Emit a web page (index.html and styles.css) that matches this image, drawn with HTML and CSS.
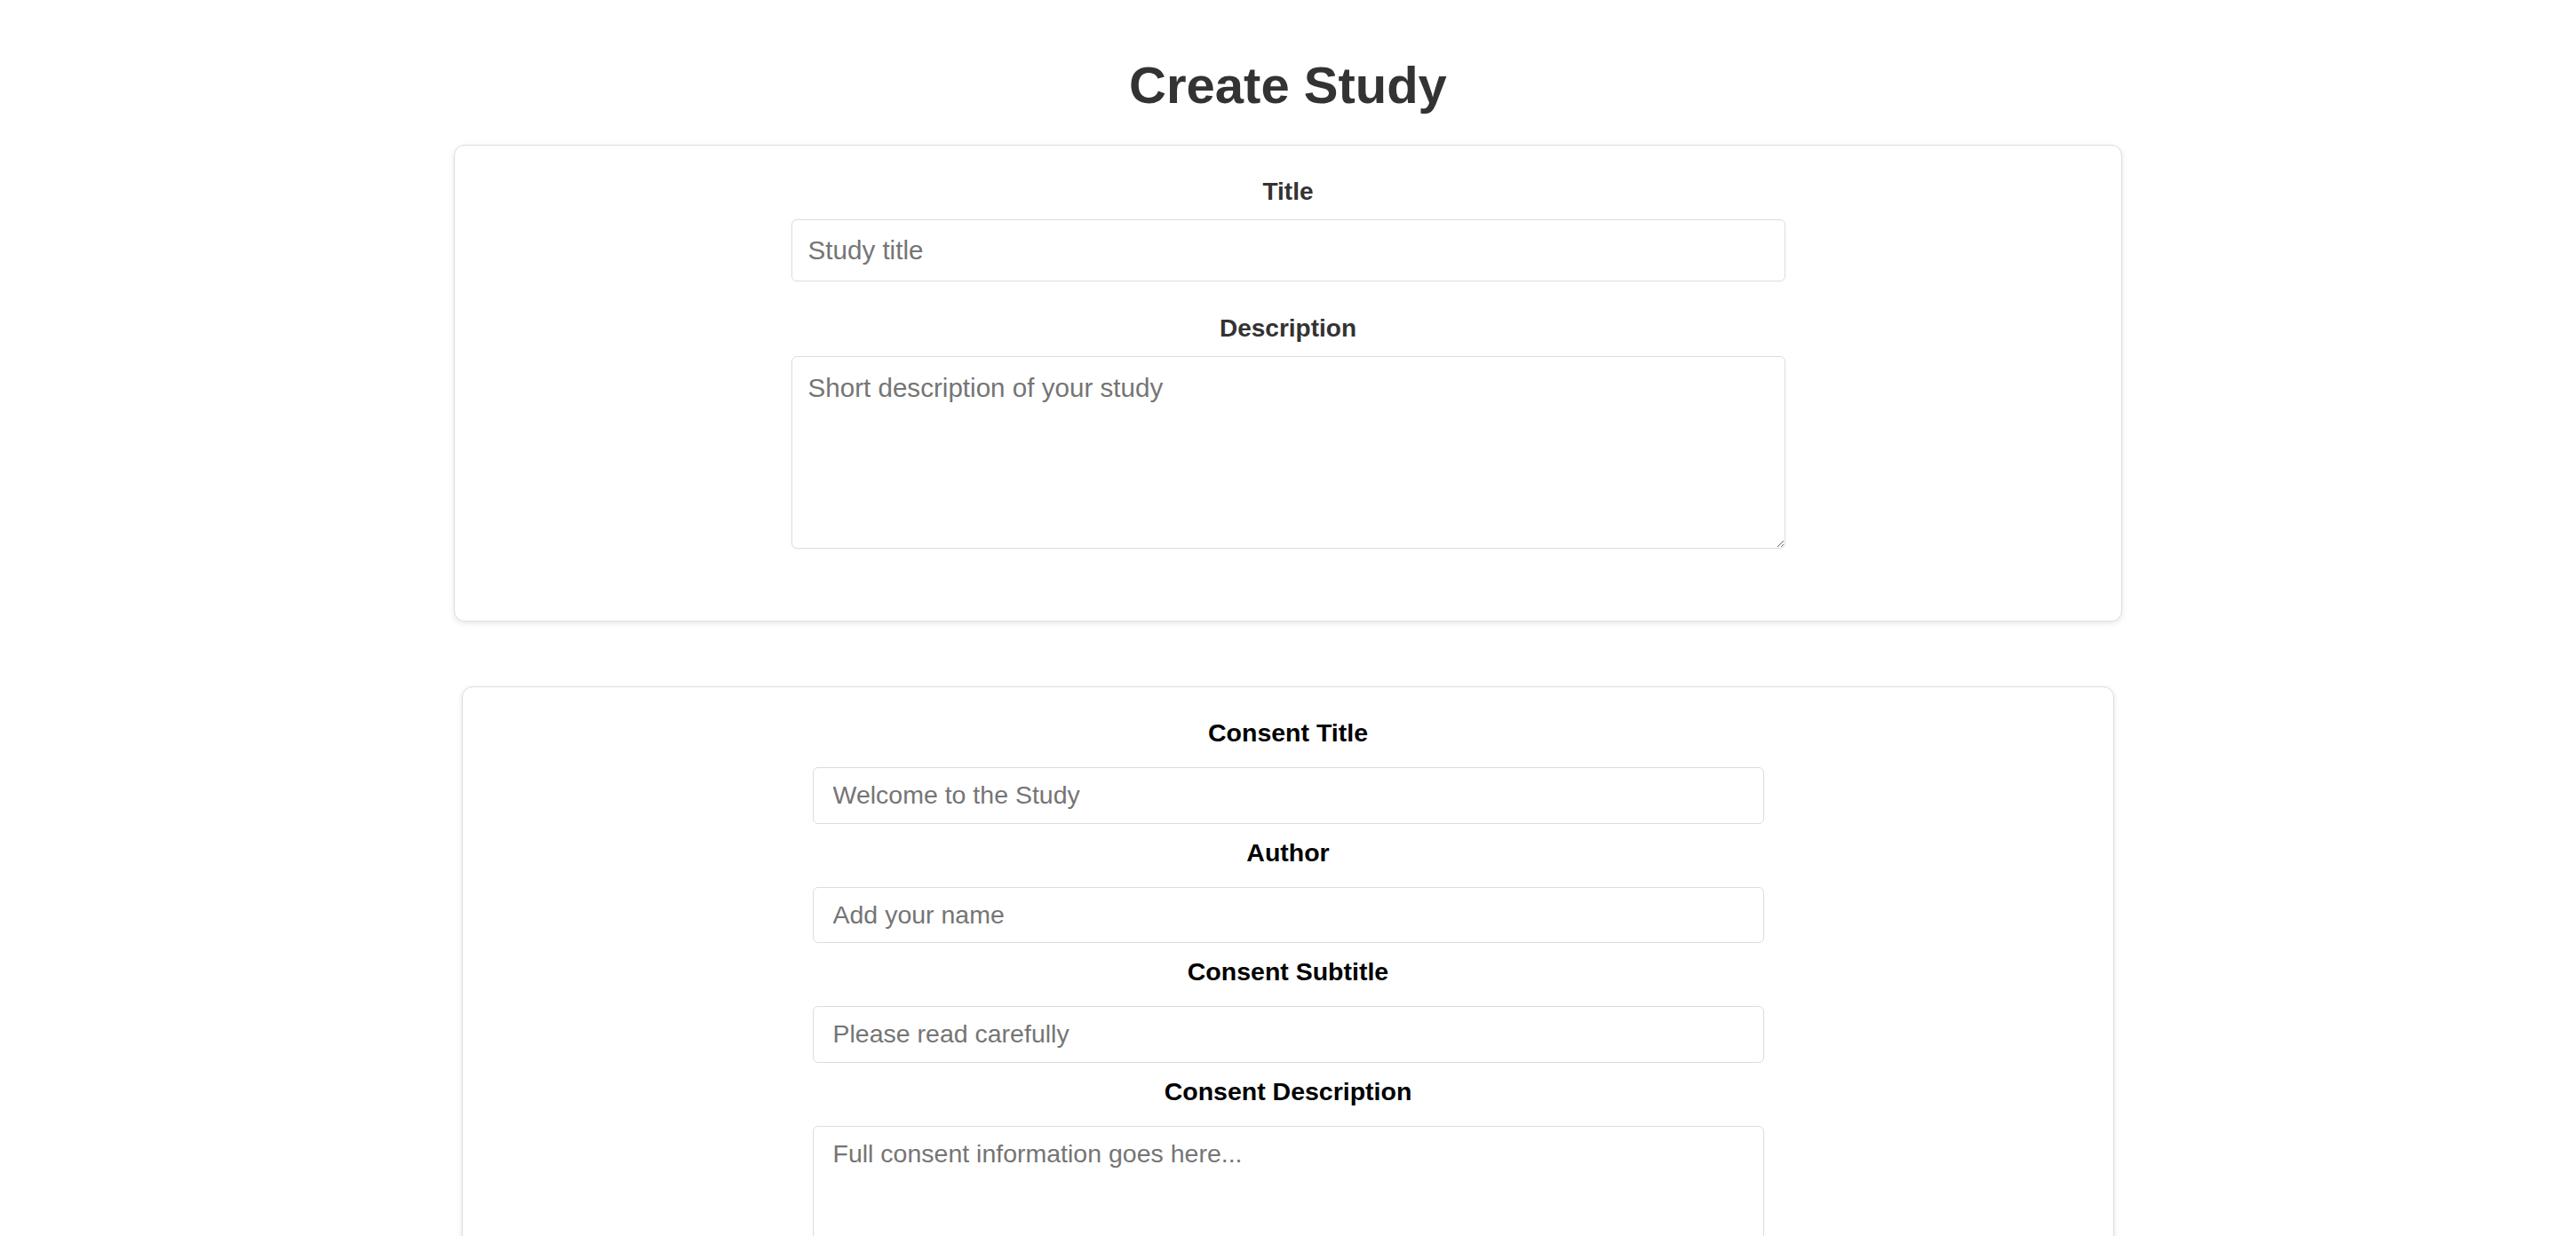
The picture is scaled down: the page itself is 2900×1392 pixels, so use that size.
FILE: index.html
```html
<!DOCTYPE html>
<html lang="en">
<head>
<meta charset="utf-8">
<title>Create Study</title>
<link rel="stylesheet" href="styles.css">
</head>
<body>
<main class="page">
  <h1 class="page-title">Create Study</h1>

  <section class="card card-study">
    <div class="field">
      <label class="label" for="title">Title</label>
      <input class="input" id="title" type="text" placeholder="Study title">
    </div>
    <div class="field">
      <label class="label" for="desc">Description</label>
      <textarea class="textarea" id="desc" placeholder="Short description of your study"></textarea>
    </div>
  </section>

  <section class="card card-consent">
    <div class="cfield">
      <label class="clabel" for="ctitle">Consent Title</label>
      <input class="cinput" id="ctitle" type="text" placeholder="Welcome to the Study">
    </div>
    <div class="cfield">
      <label class="clabel" for="author">Author</label>
      <input class="cinput" id="author" type="text" placeholder="Add your name">
    </div>
    <div class="cfield">
      <label class="clabel" for="csub">Consent Subtitle</label>
      <input class="cinput" id="csub" type="text" placeholder="Please read carefully">
    </div>
    <div class="cfield">
      <label class="clabel" for="cdesc">Consent Description</label>
      <textarea class="ctextarea" id="cdesc" placeholder="Full consent information goes here..."></textarea>
    </div>
  </section>
</main>
</body>
</html>
```

FILE: styles.css
```css
html, body {
  margin: 0;
  padding: 0;
  background: #ffffff;
}

body {
  font-family: "Liberation Sans", Arial, Helvetica, sans-serif;
  color: #333333;
}

.page {
  padding: 62px 0 80px;
}

.page-title {
  margin: 0 0 34px;
  text-align: center;
  font-size: 58px;
  line-height: 67px;
  font-weight: 700;
  color: #333333;
}

.card {
  box-sizing: border-box;
  margin: 0 auto;
  background: #ffffff;
  border: 1px solid #dedede;
  border-radius: 12px;
  box-shadow: 0 2px 6px rgba(0, 0, 0, 0.1);
}

.card-study {
  width: 1878px;
  padding: 36px 0 81px;
  display: flex;
  flex-direction: column;
  align-items: center;
  gap: 37px;
}

.card-consent {
  width: 1860px;
  margin-top: 73px;
  padding: 35px 0 42px;
  display: flex;
  flex-direction: column;
  align-items: center;
  gap: 16px;
}

.field,
.cfield {
  display: flex;
  flex-direction: column;
  align-items: center;
}

.field {
  width: 1119px;
  gap: 15px;
}

.cfield {
  width: 1071px;
  gap: 22px;
}

.label {
  display: block;
  font-size: 28px;
  line-height: 32px;
  font-weight: 700;
  color: #333333;
  text-align: center;
}

.clabel {
  display: block;
  font-size: 28.5px;
  line-height: 33px;
  font-weight: 700;
  color: #000000;
  text-align: center;
}

.input,
.textarea,
.cinput,
.ctextarea {
  display: block;
  box-sizing: border-box;
  width: 100%;
  margin: 0;
  background: #ffffff;
  border: 1px solid #dcdcdc;
  border-radius: 6px;
  font-family: "Liberation Sans", Arial, Helvetica, sans-serif;
  color: #333333;
  outline: none;
}

.input {
  height: 70px;
  padding: 0 18px;
  font-size: 29.6px;
}

.textarea {
  height: 217px;
  padding: 18px 18px 16px;
  font-size: 29.6px;
  line-height: 34px;
  resize: vertical;
}

.cinput {
  height: 63.5px;
  padding: 0 22px;
  font-size: 28.5px;
}

.ctextarea {
  height: 217px;
  padding: 14px 22px 13px;
  font-size: 28.5px;
  line-height: 33px;
  resize: vertical;
}

.input::placeholder,
.textarea::placeholder,
.cinput::placeholder,
.ctextarea::placeholder {
  color: #757575;
  opacity: 1;
}
```
